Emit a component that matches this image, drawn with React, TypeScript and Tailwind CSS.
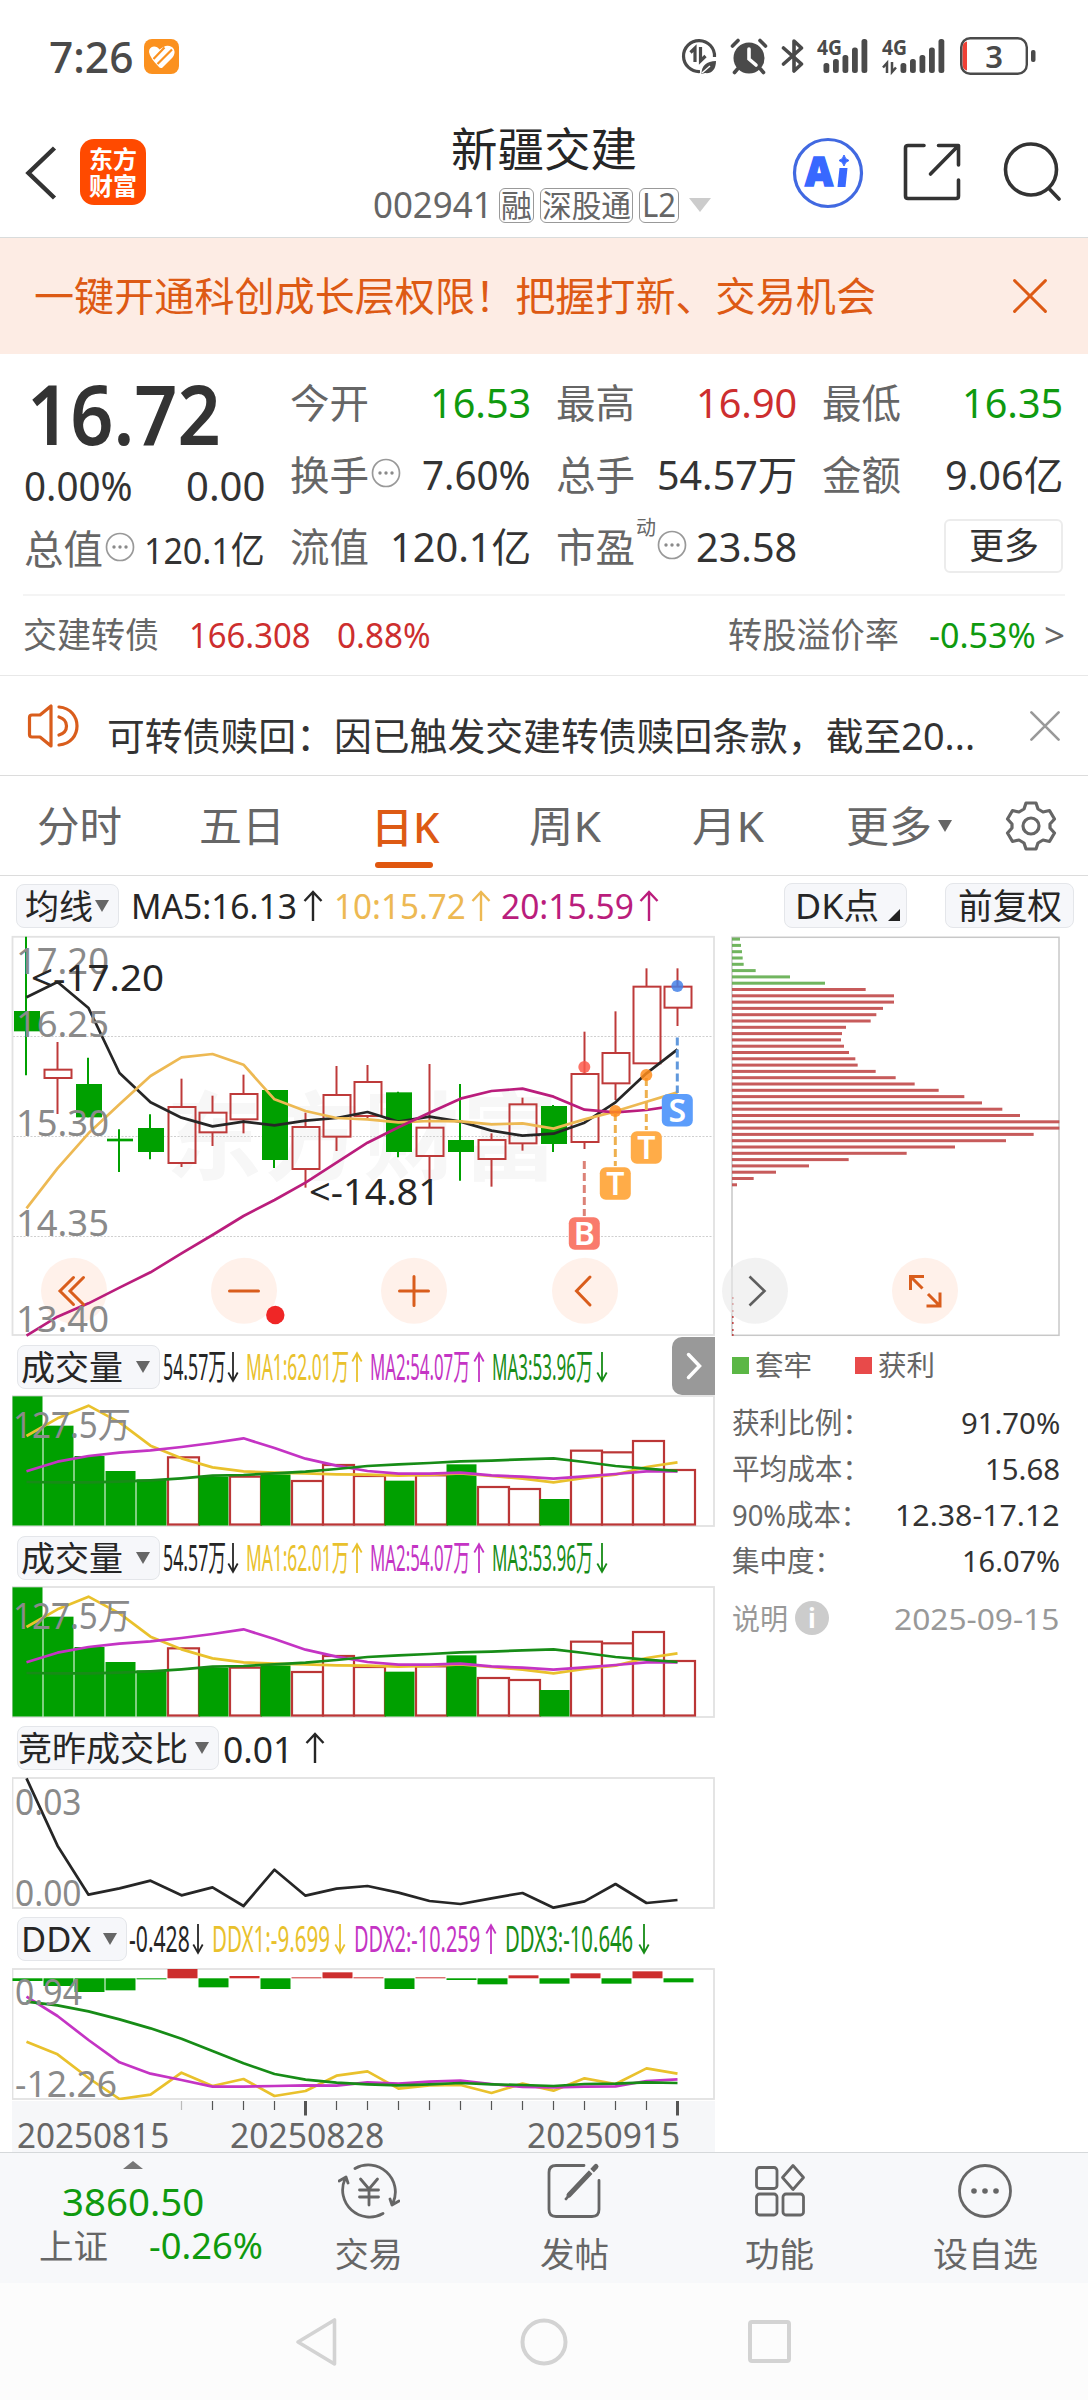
import React, { useLayoutEffect, useRef, type ReactNode } from "react";

/* Text that is condensed or widened horizontally to fill its box. */
function Fit({ className, children }: { className: string; children: ReactNode }) {
  const outer = useRef<HTMLSpanElement>(null);
  const inner = useRef<HTMLSpanElement>(null);
  useLayoutEffect(() => {
    const o = outer.current;
    const i = inner.current;
    if (o && i && i.offsetWidth > 0) {
      i.style.transform = `scaleX(${o.clientWidth / i.offsetWidth})`;
    }
  }, [children]);
  return (
    <span ref={outer} className={`flex shrink-0 whitespace-nowrap leading-none ${className}`}>
      <span ref={inner} className="inline-block shrink-0 origin-left whitespace-pre">
        {children}
      </span>
    </span>
  );
}

const X0 = 26;
const STEP = 31;
const cx = (i: number) => X0 + STEP * i;

function Series({ ys, base, color }: { ys: number[]; base: number; color: string }) {
  return (
    <polyline
      points={ys.map((v, i) => `${cx(i) + 0.5},${base + v / 3}`).join(" ")}
      fill="none"
      stroke={color}
      strokeWidth="2.7"
      strokeLinejoin="round"
    />
  );
}

function Frame({ y, h }: { y: number; h: number }) {
  return <rect x="12.5" y={y} width="701.5" height={h} fill="none" stroke="#e2e2e2" strokeWidth="1.8" />;
}

/* [kind, high, low, bodyTop, bodyBottom] */
const candles: [string, number, number, number, number][] = [
  ["g", 50, 466, 273, 334], ["r", 366, 582, 449, 474], ["g", 413, 592, 492, 592], ["g", 628, 756, 656, 664],
  ["g", 583, 718, 624, 696], ["r", 476, 741, 561, 729], ["r", 527, 678, 578, 637], ["r", 464, 640, 522, 598],
  ["g", 510, 744, 510, 720], ["r", 578, 803, 621, 747], ["r", 438, 693, 525, 650], ["r", 435, 594, 486, 588],
  ["g", 515, 712, 517, 696], ["r", 432, 780, 623, 708], ["g", 492, 782, 660, 696], ["r", 640, 800, 660, 717],
  ["r", 533, 692, 553, 670], ["g", 555, 696, 558, 672], ["r", 335, 687, 462, 666], ["r", 274, 540, 399, 490],
  ["r", 145, 430, 200, 430], ["r", 145, 318, 200, 263],
];
const ma5 = [232, 186, 264, 459, 547, 593, 619, 605, 616, 602, 594, 576, 605, 590, 605, 632, 647, 641, 608, 547, 460, 388];
const ma10 = [865, 745, 640, 553, 468, 412, 402, 434, 538, 573, 594, 598, 607, 603, 604, 613, 610, 626, 598, 574, 545, 517];
const ma20 = [1247, 1190, 1150, 1103, 1057, 1000, 945, 888, 840, 788, 728, 668, 622, 578, 536, 513, 506, 530, 569, 577, 570, 556];

function AxisText({ x, y, w, children, color = "#8a8a8a", size = 37 }: { x: number; y: number; w: number; children: string; color?: string; size?: number }) {
  return (
    <text x={x - 2} y={y} fontSize={size} fill={color} textLength={w + 4} lengthAdjust="spacingAndGlyphs">
      {children}
    </text>
  );
}

function Signal({ x, y, dotY, from, to, color, line, dot, label }: { x: number; y: number; dotY: number; from: number; to: number; color: string; line: string; dot: string; label: string }) {
  return (
    <g>
      <line x1={x} x2={x} y1={from} y2={to} stroke={line} strokeWidth="3" strokeDasharray="8 4" />
      <circle cx={x} cy={dotY} r="6" fill={dot} fillOpacity="0.85" />
      <rect x={x - 15.5} y={y} width="31" height="32.5" rx="6" fill={color} />
      <text x={x} y={y + 27.5} fontSize="32" fontWeight="600" fill="#fff" textAnchor="middle">
        {label}
      </text>
    </g>
  );
}

function KChart() {
  return (
    <svg className="block h-[402px] w-[704px] overflow-visible" viewBox="12 935 704 402">
      <text x="166" y="1172" fontSize="96" fontWeight="700" fill="#f7f7f7" textLength="392">东方财富</text>
      {[1036.5, 1136.5, 1236.5].map((y) => (
        <line key={y} x1="13" x2="714" y1={y} y2={y} stroke="#cfcfcf" strokeWidth="1" strokeDasharray="2 1.5" />
      ))}
      <Frame y={936.8} h={398.2} />
      {[74, 244, 414, 585].map((x) => (
        <circle key={x} cx={x} cy="1290.7" r="33" fill="#fff1ea" />
      ))}
      {candles.map(([k, hi, lo, t, b], i) => {
        const y = (v: number) => 920 + v / 3;
        const c = k === "g" ? "#00a000" : "#be3a3a";
        return k === "g" ? (
          <g key={i}>
            <line x1={cx(i)} x2={cx(i)} y1={y(hi)} y2={y(lo)} stroke={c} strokeWidth="2" />
            <rect x={cx(i) - 12} y={y(t)} width="26" height={y(b) - y(t)} fill={c} />
          </g>
        ) : (
          <g key={i} stroke={c} strokeWidth="2" fill="none">
            <line x1={cx(i) + 0.5} x2={cx(i) + 0.5} y1={y(hi)} y2={y(t)} />
            <line x1={cx(i) + 0.5} x2={cx(i) + 0.5} y1={y(b)} y2={y(lo)} />
            <rect x={cx(i) - 12.5} y={y(t)} width="27" height={y(b) - y(t)} />
          </g>
        );
      })}
      <Series ys={ma5} base={920} color="#262626" />
      <Series ys={ma10} base={920} color="#edb953" />
      <Series ys={ma20} base={920} color="#ba1d7c" />
      <AxisText x={18} y={974} w={89}>17.20</AxisText>
      <AxisText x={18} y={1037} w={89}>16.25</AxisText>
      <AxisText x={18} y={1136} w={89}>15.30</AxisText>
      <AxisText x={18} y={1236} w={89}>14.35</AxisText>
      <AxisText x={18} y={1332} w={89}>13.40</AxisText>
      <AxisText x={33} y={991} w={129} color="#262626">{"<-17.20"}</AxisText>
      <AxisText x={311} y={1205} w={127} color="#262626">{"<-14.81"}</AxisText>
      <g fill="none" stroke="#d95d1c" strokeWidth="3" strokeLinecap="round">
        <path d="M73.5 1277.5 60 1291l13.500 13.500M83.500 1277.500 70 1291l13.500 13.500" />
        <path d="M229.500 1291h29" />
        <path d="M399.500 1291h29M414 1276.500v29" />
        <path d="M590 1277 576.500 1291l13.500 14" />
      </g>
      <circle cx="275.3" cy="1315" r="9.200" fill="#ef2626" />
      <Signal x={584.3} y={1217.3} dotY={1067} from={1161} to={1216} color="#f97b6c" line="#dc8277" dot="#fb5a4c" label="B" />
      <Signal x={615.3} y={1167.3} dotY={1111} from={1113} to={1166} color="#ffac48" line="#eeb04e" dot="#ff8d1c" label="T" />
      <Signal x={646.3} y={1131.3} dotY={1075} from={1078} to={1130} color="#ffac48" line="#eeb04e" dot="#ff8d1c" label="T" />
      <Signal x={677.3} y={1094} dotY={986} from={1037.500} to={1093} color="#5c9dfb" line="#6098dc" dot="#4481e8" label="S" />
    </svg>
  );
}

const volumes: [string, number][] = [
  ["g", 199], ["g", 287], ["g", 378], ["g", 423], ["g", 448], ["r", 382], ["g", 440], ["r", 440], ["g", 433], ["r", 453], ["r", 405],
  ["r", 438], ["g", 452], ["r", 436], ["g", 403], ["r", 471], ["r", 477], ["g", 507], ["r", 362], ["r", 367], ["r", 333], ["r", 420],
];
const vol1 = [318, 265, 227, 277, 347, 385, 412, 424, 428, 430, 433, 434, 437, 435, 430, 438, 446, 457, 444, 434, 411, 397];
const vol2 = [424, 395, 378, 368, 361, 351, 339, 325, 354, 386, 407, 423, 431, 431, 428, 436, 440, 446, 439, 432, 424, 424];
const vol3 = [456, 457, 457, 455, 451, 445, 437, 435, 430, 425, 417, 408, 403, 399, 394, 392, 388, 385, 396, 408, 416, 423];

function VolumeChart() {
  return (
    <svg className="block h-[132px] w-[704px]" viewBox="12 1395 704 132">
      <Frame y={1396} h={130} />
      {volumes.map(([k, t], i) => {
        const y = 1330 + t / 3;
        return k === "g" ? (
          <rect key={i} x={12.500 + STEP * i} y={y} width="30" height={1525.500 - y} fill="#00a000" />
        ) : (
          <rect key={i} x={12.500 + STEP * i + 0.500} y={y} width="31" height={1524.500 - y} fill="#fff" stroke="#bb3636" strokeWidth="2.200" />
        );
      })}
      <Series ys={vol1} base={1330} color="#e9c12c" />
      <Series ys={vol2} base={1330} color="#c434c4" />
      <Series ys={vol3} base={1330} color="#178c17" />
      <AxisText x={15} y={1438} w={114} size={36}>127.5万</AxisText>
    </svg>
  );
}

const ratio = [715, 917, 1064, 1045, 1022, 1066, 1042, 1098, 989, 1067, 1046, 1038, 1058, 1083, 1092, 1075, 1059, 1103, 1084, 1032, 1089, 1080];

function RatioChart() {
  return (
    <svg className="block h-[132px] w-[704px]" viewBox="12 1777 704 132">
      <Frame y={1778} h={130} />
      <Series ys={ratio} base={1540} color="#262626" />
      <AxisText x={17} y={1815} w={62.500} size={36}>0.03</AxisText>
      <AxisText x={17} y={1906} w={62.500} size={36}>0.00</AxisText>
    </svg>
  );
}

const ddxBars: [string, number][] = [
  ["g", 243], ["g", 258], ["g", 276], ["g", 271], ["g", 238], ["r", 207], ["g", 262], ["r", 228], ["g", 267], ["r", 232], ["r", 217],
  ["r", 232], ["g", 267], ["r", 232], ["g", 240], ["g", 253], ["r", 226], ["g", 251], ["r", 220], ["g", 251], ["r", 214], ["g", 247],
];
const ddx1 = [425, 463, 534, 597, 584, 518, 558, 537, 588, 573, 527, 514, 566, 556, 555, 579, 551, 572, 535, 552, 505, 521];
const ddx2 = [290, 348, 420, 487, 521, 540, 560, 560, 558, 556, 557, 547, 551, 545, 542, 552, 561, 562, 560, 559, 543, 538];
const ddx3 = [305, 316, 334, 358, 385, 416, 453, 490, 522, 539, 548, 553, 556, 553, 549, 553, 555, 558, 552, 551, 547, 549];

function DdxChart() {
  return (
    <svg className="block h-[132px] w-[704px]" viewBox="12 1968 704 132">
      <Frame y={1969} h={130} />
      {ddxBars.map(([k, v], i) => {
        const y = 1900 + v / 3;
        return k === "g" ? (
          <rect key={i} x={12.500 + STEP * i} y={1978.300} width="30" height={y - 1978.300} fill="#00a000" />
        ) : (
          <rect key={i} x={12.500 + STEP * i} y={y} width="30" height={1978.300 - y} fill="#cd2e2e" />
        );
      })}
      <Series ys={ddx1} base={1900} color="#e9c12c" />
      <Series ys={ddx2} base={1900} color="#c434c4" />
      <Series ys={ddx3} base={1900} color="#178c17" />
      <AxisText x={17} y={2005} w={63} size={36}>0.94</AxisText>
      <AxisText x={17} y={2097} w={98} size={36}>-12.26</AxisText>
    </svg>
  );
}

const chips = [
  120, 123, 126, 128, 131, 167, 270, 375, 497, 582, 582, 549, 529, 512, 438, 426, 423, 432, 447, 466, 473, 527, 587, 644, 716, 793, 846,
  907, 960, 1078, 1078, 1001, 918, 765, 620, 446, 327, 228, 161, 111,
];

function ChipChart() {
  return (
    <svg className="block h-[402px] w-[340px] overflow-visible" viewBox="731 935 340 402">
      <rect x="732" y="937.300" width="327" height="398" fill="none" stroke="#c8c8c8" strokeWidth="1.500" />
      <g className="opacity-90">
        {chips.map((v, i) => (
          <rect key={i} x="732" y={937.600 + i * 6.300} width={(v - 96) / 3} height="3" fill={i < 8 ? "#62ad4e" : "#c14a4a"} />
        ))}
      </g>
      {[1297, 1303, 1310, 1316, 1322, 1329, 1334].map((y) => (
        <rect key={y} x="732" y={y} width="1.600" height="2" fill="#c14a4a" />
      ))}
      <circle cx="755" cy="1290.700" r="33" fill="#e9e9e9" fillOpacity="0.6" />
      <path d="m749.500 1276.500 15 14.500-15 14.500" fill="none" stroke="#5f5f5f" strokeWidth="2.600" />
      <circle cx="925" cy="1290.700" r="33" fill="#fff1ea" />
      <g fill="none" stroke="#d95d1c" strokeWidth="3">
        <path d="M924 1276.500h-13.500V1290M911 1277l11.500 11.500M926.500 1306H940v-13.500M939.500 1305.500 928 1294" />
      </g>
    </svg>
  );
}

function MoreDots({ className = "" }: { className?: string }) {
  return (
    <svg className={`h-[30px] w-[30px] shrink-0 ${className}`} viewBox="0 0 30 30">
      <circle cx="15" cy="15" r="13.500" fill="none" stroke="#999" strokeWidth="1.700" />
      {[9, 15, 21].map((x) => (
        <circle key={x} cx={x} cy="15" r="1.700" fill="#8a8a8a" />
      ))}
    </svg>
  );
}

function Cross({ className }: { className: string }) {
  return (
    <svg className={className} viewBox="0 0 32 32" fill="none" stroke="currentColor" strokeWidth="2.800" strokeLinecap="round">
      <path d="m1.500 1.500 29 29m0-29-29 29" />
    </svg>
  );
}

function Down({ className }: { className: string }) {
  return (
    <svg className={`h-[12px] w-[14px] shrink-0 ${className}`} viewBox="0 0 14 12">
      <path d="M0 0h14L7 12z" fill="#666" />
    </svg>
  );
}

function Selector({ className, textClass, children }: { className: string; textClass: string; children: string }) {
  return (
    <div className={`flex h-[44px] shrink-0 items-center justify-between rounded-[8px] border-[1.5px] border-[#e4e6ea] bg-[#f6f7fa] pr-[9px] text-[34px] text-[#262626] ${className}`}>
      <Fit className={textClass}>{children}</Fit>
      <Down className="" />
    </div>
  );
}

function Reading({ className, value, arrow, widthClass }: { className: string; value: string; arrow: string; widthClass: string }) {
  return (
    <div className={`flex shrink-0 items-center ${className}`}>
      <Fit className={widthClass}>{value}</Fit>
      <Arrow up={arrow === "↑"} />
    </div>
  );
}

function Arrow({ up, wide = false }: { up: boolean; wide?: boolean }) {
  return wide ? (
    <svg className="h-[32px] w-[20px] shrink-0" viewBox="0 0 20 32" fill="none" stroke="currentColor" strokeWidth="2.400">
      <path d="M10 31V2M1.500 11 10 2l8.500 9" />
    </svg>
  ) : (
    <svg className={`h-[32px] w-[12px] shrink-0 ${up ? "" : "rotate-180"}`} viewBox="0 0 12 32" fill="none" stroke="currentColor" strokeWidth="1.800">
      <path d="M6 31V2M1.300 10.500 6 2l4.700 8.500" />
    </svg>
  );
}

function VolumeHead({ expandable }: { expandable: boolean }) {
  return (
    <div className="flex h-[58px] items-center pt-[2px] text-[36px]">
      <Selector className="ml-[5px] w-[143px] pl-[3px]" textClass="w-[102px]">成交量</Selector>
      <Reading className="ml-[3px] gap-px text-[#262626]" widthClass="w-[63px]" value="54.57万" arrow="↓" />
      <Reading className="ml-[7px] gap-[2px] text-[#e9c12c]" widthClass="w-[103px]" value="MA1:62.01万" arrow="↑" />
      <Reading className="ml-[7px] gap-[3px] text-[#c434c4]" widthClass="w-[100px]" value="MA2:54.07万" arrow="↑" />
      <Reading className="ml-[7px] gap-[3px] text-[#178c17]" widthClass="w-[101px]" value="MA3:53.96万" arrow="↓" />
      {expandable && (
        <div className="-mt-[2px] ml-auto mr-px flex h-[58px] w-[43px] items-center justify-center rounded-l-[10px] bg-[#999]">
          <svg className="h-[28px] w-[16px]" viewBox="0 0 16 28" fill="none" stroke="#fff" strokeWidth="3.500" strokeLinecap="round">
            <path d="m2.500 2.500 11 11.500-11 11.500" />
          </svg>
        </div>
      )}
    </div>
  );
}

function Stat({ label, dots, sup, value, widthClass, color = "text-[#333]", small }: { label: string; dots?: boolean; sup?: string; value: string; widthClass: string; color?: string; small?: boolean }) {
  return (
    <div className="flex h-[72px] items-center">
      <Fit className="w-[79px] text-[40px] text-[#666]">{label}</Fit>
      {sup && <span className="-mr-[2px] -mt-[38px] w-[22px] pl-px text-[20px] leading-none text-[#666]">{sup}</span>}
      {dots && <MoreDots className="-mt-[5px] ml-[2px]" />}
      <Fit className={`ml-auto ${small ? "text-[37px]" : "text-[40px]"} ${color} ${widthClass}`}>{value}</Fit>
    </div>
  );
}

function StatusBar() {
  const g = "#4a4a4a";
  return (
    <div className="flex h-[112px] items-center pl-[49px] text-[#4a4a4a]">
      <Fit className="-mt-px w-[84px] text-[44px] font-medium">7:26</Fit>
      <svg className="ml-[11px] h-[35px] w-[35px]" viewBox="0 0 35 35">
        <rect width="35" height="35" rx="8" fill="#fb911f" />
        <path d="M5 13q0-5 5-5.500 3.500 0 5.500 3 3-2.500 6-3.500 6-1 8.500 3.500 1.500 4-1.500 8L18 29q-2 .5-3.500-1.500Q6 19 5 13z" fill="#fff" />
        <path d="M9.500 20 20.500 8.500M13.500 25 28 10.500" fill="none" stroke="#fb911f" strokeWidth="2.200" />
      </svg>
      <svg className="ml-[502px] h-[36px] w-[36px]" viewBox="0 0 36 36" fill="none" stroke={g} strokeWidth="3.200">
        <path d="M19 33.500A15.500 15.500 0 1 1 33.500 19" />
        <path d="M9.500 14.500 14 10v14M19.500 9v14l5-5" />
        <path d="M20.500 36c0-8 5-13 14.500-13 0 9-5 13-11 12z" fill={g} stroke="none" />
        <path d="m21 35 8-7" stroke="#fff" strokeWidth="1.500" />
      </svg>
      <svg className="ml-[13px] h-[37px] w-[38px]" viewBox="0 0 38 37" fill="none" stroke={g} strokeLinecap="round">
        <circle cx="19" cy="20" r="15.500" fill={g} stroke="none" />
        <path d="M2.500 8 8 2.500M35.500 8 30 2.500M7.500 31 4.500 34.500M30.500 31l3 3.500" strokeWidth="3.600" />
        <path d="M19 11v10l7 6" stroke="#fff" strokeWidth="3.600" />
      </svg>
      <svg className="ml-[13px] h-[36px] w-[24px]" viewBox="0 0 24 36" fill="none" stroke={g} strokeWidth="3.600" strokeLinecap="round" strokeLinejoin="round">
        <path d="m2.500 10 18 16-7.500 7V3l7.500 7-18 16" />
      </svg>
      <svg className="ml-[12px] h-[36px] w-[52px] overflow-visible" viewBox="0 0 52 36">
        <text x="0" y="17" fontSize="22" fontWeight="700" fill={g} textLength="25" lengthAdjust="spacingAndGlyphs">4G</text>
        {[[6.5, 25], [16, 21], [25.5, 17], [35, 9.500], [44.500, 1]].map(([x, y]) => (
          <rect key={x} x={x} y={y} width="5.800" height={35 - y} rx="2.500" fill={g} />
        ))}
      </svg>
      <svg className="ml-[13px] h-[36px] w-[64px] overflow-visible" viewBox="0 0 64 36">
        <text x="0" y="17" fontSize="22" fontWeight="700" fill={g} textLength="25" lengthAdjust="spacingAndGlyphs">4G</text>
        <path d="M1 29.500 5 25v10M10 24v10l4-4.500" fill="none" stroke={g} strokeWidth="2.500" />
        {[[18.500, 25], [28, 21], [37.500, 17], [47, 9.500], [56.500, 1]].map(([x, y]) => (
          <rect key={x} x={x} y={y} width="5.800" height={35 - y} rx="2.500" fill={g} />
        ))}
      </svg>
      <svg className="ml-[14px] h-[38px] w-[78px] overflow-visible" viewBox="0 0 78 38">
        <path d="M7 4.500v29q-4.500-1-4.500-6v-17q0-5 4.500-6z" fill="#ef4136" />
        <rect x="1.200" y="1.200" width="65.600" height="35.600" rx="9" fill="none" stroke={g} strokeWidth="2.400" />
        <rect x="71" y="13" width="4.500" height="12" rx="2" fill={g} />
        <text x="34" y="30.500" fontSize="31" fontWeight="600" fill={g} textAnchor="middle">3</text>
      </svg>
    </div>
  );
}

function Header() {
  return (
    <header className="flex h-[126px] items-center border-b border-[#d9dcdc] text-[#333]">
      <svg className="-mt-[4px] ml-[25px] h-[54px] w-[32px] shrink-0" viewBox="0 0 32 54" fill="none" stroke="#333" strokeWidth="4.500">
        <path d="M29.500 2 3.500 27l26 25" />
      </svg>
      <div className="-mt-[5px] ml-[23px] flex h-[66px] w-[66px] shrink-0 flex-col items-center justify-center rounded-[14px] bg-[#ff4a00] text-[24px] font-bold text-white">
        <span className="leading-[27px]">东方</span>
        <span className="leading-[27px]">财富</span>
      </div>
      <div className="ml-[227px] flex w-[342px] shrink-0 flex-col">
        <h1 className="ml-[78px] mt-[2px] flex h-[54px] items-center text-[46px] font-normal text-[#262626]">
          <Fit className="w-[186px]">新疆交建</Fit>
        </h1>
        <div className="mt-[5px] flex h-[50px] items-center text-[#666]">
          <Fit className="w-[120px] text-[36px]">002941</Fit>
          <div className="ml-[6px] flex h-[35px] w-[35px] items-center justify-center rounded-[6px] border-[1.5px] border-[#999] text-[31px]">
            <Fit className="w-[31px]">融</Fit>
          </div>
          <div className="ml-[6px] flex h-[35px] w-[93px] items-center justify-center rounded-[6px] border-[1.5px] border-[#999] text-[31px]">
            <Fit className="w-[89px]">深股通</Fit>
          </div>
          <div className="ml-[6px] flex h-[35px] w-[40px] items-center justify-center rounded-[6px] border-[1.5px] border-[#999] text-[32px]">
            <Fit className="w-[34px]">L2</Fit>
          </div>
          <svg className="ml-[10px] h-[14px] w-[22px]" viewBox="0 0 22 14"><path d="M0 0h22L11 14z" fill="#ccc" /></svg>
        </div>
      </div>
      <svg className="-mt-[4px] ml-[77px] h-[72px] w-[72px] shrink-0" viewBox="0 0 72 72">
        <circle cx="36" cy="36" r="33.500" fill="none" stroke="#4169e1" strokeWidth="3.200" />
        <path d="M52 18q1 4.500 5 5.500-4 1-5 5.500-1-4.500-5-5.500 4-1 5-5.500z" fill="#3868ff" stroke="#3868ff" strokeWidth="1" />
        <text x="13" y="49" fontSize="40" fontWeight="900" fill="#3868ff" stroke="#3868ff" strokeWidth="1.500" textLength="28" lengthAdjust="spacingAndGlyphs">A</text>
        <path d="M47.500 31h8l-2 19h-8z" fill="#3868ff" />
      </svg>
      <svg className="-mt-[6px] ml-[39px] h-[58px] w-[58px] shrink-0" viewBox="0 0 58 58" fill="none" stroke="#333" strokeWidth="3.600" strokeLinecap="round" strokeLinejoin="round">
        <path d="M21 2.500H5Q2.500 2.500 2.500 5v48q0 2.500 2.500 2.500h48q2.500 0 2.500-2.500V37M35.500 2.500h20v19.500M55 3 27.500 31" />
      </svg>
      <svg className="-mt-[6px] ml-[42px] h-[59px] w-[59px] shrink-0" viewBox="0 0 59 59" fill="none" stroke="#333" strokeWidth="3.600" strokeLinecap="round">
        <circle cx="28" cy="27.500" r="25.500" />
        <path d="m46 46.500 10 10.500" />
      </svg>
    </header>
  );
}

function Quote() {
  return (
    <section className="grid h-[240px] grid-cols-[241px_241px_241px_241px] gap-x-[25px] pl-[24px] pt-[13px]">
      <div className="flex flex-col">
        <div className="flex h-[90px] items-center pl-[3px]">
          <Fit className="w-[194px] text-[83px] font-semibold text-[#333]">16.72</Fit>
        </div>
        <div className="flex h-[56px] items-center justify-between pt-[2px] text-[40px] text-[#333]">
          <Fit className="w-[109px]">0.00%</Fit>
          <Fit className="w-[79px]">0.00</Fit>
        </div>
        <Stat label="总值" dots value="120.1亿" widthClass="w-[121px]" small />
      </div>
      <div>
        <Stat label="今开" value="16.53" widthClass="w-[101px]" color="text-[#0f9a0f]" />
        <Stat label="换手" dots value="7.60%" widthClass="w-[109px]" />
        <Stat label="流值" value="120.1亿" widthClass="w-[141px]" />
      </div>
      <div>
        <Stat label="最高" value="16.90" widthClass="w-[101px]" color="text-[#cd2e2e]" />
        <Stat label="总手" value="54.57万" widthClass="w-[140px]" />
        <Stat label="市盈" sup="动" dots value="23.58" widthClass="w-[101px]" />
      </div>
      <div>
        <Stat label="最低" value="16.35" widthClass="w-[101px]" color="text-[#0f9a0f]" />
        <Stat label="金额" value="9.06亿" widthClass="w-[118px]" />
        <div className="ml-auto mt-[8px] flex h-[54px] w-[119px] items-center justify-center rounded-[6px] border-2 border-[#ececec] text-[36px] text-[#333]">
          <Fit className="w-[70px]">更多</Fit>
        </div>
      </div>
    </section>
  );
}

function Tabs() {
  return (
    <nav className="flex h-[100px] items-center border-b border-[#dcdcdc] text-[42px] text-[#666]">
      <Fit className="ml-[37px] w-[85px]">分时</Fit>
      <Fit className="ml-[77px] w-[86px]">五日</Fit>
      <div className="ml-[86px] flex h-full w-[69px] flex-col justify-end text-[#dd5a14]">
        <Fit className="w-[69px] font-medium">日K</Fit>
        <div className="mb-[7px] ml-[4px] mt-[14px] h-[6px] w-[58px] rounded-full bg-[#e0570f]" />
      </div>
      <Fit className="ml-[89px] w-[72px]">周K</Fit>
      <Fit className="ml-[91px] w-[72px]">月K</Fit>
      <Fit className="ml-[82px] w-[86px]">更多</Fit>
      <Down className="ml-[6px]" />
      <svg className="ml-[53px] h-[52px] w-[52px]" viewBox="0 0 52 52" fill="none" stroke="#666" strokeWidth="3.200" strokeLinejoin="round">
        <path d="M21 3h10l2 6 5 3 6.500-1.500 5 8.500-4.500 5v4l4.500 5-5 8.500L38 40l-5 3-2 6H21l-2-6-5-3-6.500 1.500-5-8.500L7 28v-4l-4.500-5 5-8.500L14 12l5-3z" />
        <circle cx="26" cy="26" r="8" />
      </svg>
    </nav>
  );
}

function ChipRow({ label, labelW, value, valueW }: { label: string; labelW: string; value: string; valueW: string }) {
  return (
    <div className="flex h-[46px] w-[328px] items-center justify-between text-[29px]">
      <Fit className={`text-[#666] ${labelW}`}>{label}</Fit>
      <Fit className={`text-[#333] ${valueW}`}>{value}</Fit>
    </div>
  );
}

function DateAxis() {
  return (
    <div className="mt-px flex h-[51px] w-[703px] flex-col bg-[#f6f7f9]">
      <svg className="block h-[15px] w-[703px] shrink-0" viewBox="12 2101 703 15">
        {Array.from({ length: 17 }, (_, k) => k + 5).map((i) => {
          const major = i === 9 || i === 21;
          return <line key={i} x1={cx(i) + 0.500} x2={cx(i) + 0.500} y1="2101" y2={major ? 2115.500 : 2110} stroke={i === 5 ? "#bbb" : "#555"} strokeWidth={major ? 3 : 1.200} />;
        })}
      </svg>
      <div className="flex h-[36px] items-center text-[35px] text-[#666]">
        <Fit className="ml-[5px] w-[152px]">20250815</Fit>
        <Fit className="ml-[61px] w-[154px]">20250828</Fit>
        <Fit className="ml-[143px] w-[153px]">20250915</Fit>
      </div>
    </div>
  );
}

function BottomItem({ icon, label, widthClass }: { icon: ReactNode; label: string; widthClass: string }) {
  return (
    <div className="flex w-[205.500px] shrink-0 flex-col items-center">
      <svg className="mt-[9px] h-[58px] w-[62px]" viewBox="-31 -29 62 58" fill="none" stroke="#666" strokeWidth="2.800" strokeLinecap="round" strokeLinejoin="round">
        {icon}
      </svg>
      <Fit className={`mt-[17px] text-[34px] text-[#666] ${widthClass}`}>{label}</Fit>
    </div>
  );
}

function BottomBar() {
  return (
    <footer className="flex h-[131px] border-t border-[#d5d8da] bg-[#f7f8fa]">
      <div className="flex w-[266px] shrink-0 flex-col items-start">
        <svg className="ml-[123px] mt-[8px] h-[8px] w-[20px]" viewBox="0 0 20 8"><path d="M10 0 20 8H0z" fill="#777" /></svg>
        <Fit className="ml-[62px] mt-[12px] w-[142px] text-[39px] text-[#0f9a0f]">3860.50</Fit>
        <div className="ml-[39px] mt-[8px] flex items-center text-[#666]">
          <Fit className="w-[69px] text-[34px]">上证</Fit>
          <Fit className="ml-[41px] w-[114px] text-[36px] text-[#0f9a0f]">-0.26%</Fit>
        </div>
      </div>
      <BottomItem
        label="交易"
        widthClass="w-[68px]"
        icon={
          <g>
            <path d="M-14-22.500A27 27 0 0 1 24 12M14 22.500A27 27 0 0 1-24-12M-30-10l7-4 2 6M30 10l-7 4-2-6" />
            <path d="M-8.500-12 0-2l8.500-10M-9.500-1h19M-9.500 6h19M0-2v16" />
          </g>
        }
      />
      <BottomItem
        label="发帖"
        widthClass="w-[69px]"
        icon={
          <g>
            <path d="M10-25.500h-28q-7 0-7 7v37q0 7 7 7h36q7 0 7-7v-29" />
            <path d="M22-24.500-5 4" strokeWidth="5" />
            <path d="m-4 3-4 5" />
            <path d="m15-22 6 6" stroke="#f7f8fa" strokeWidth="2" />
          </g>
        }
      />
      <BottomItem
        label="功能"
        widthClass="w-[69px]"
        icon={
          <g>
            <rect x="-23.500" y="-23.500" width="20.500" height="21" rx="3" />
            <rect x="-23.500" y="3" width="20.500" height="21" rx="3" />
            <rect x="3" y="3" width="20.500" height="21" rx="3" />
            <path d="m13-25.500 10.500 12L13-1.500 2.500-13.500z" />
          </g>
        }
      />
      <BottomItem
        label="设自选"
        widthClass="w-[105px]"
        icon={
          <g>
            <circle cx="0" cy="0" r="25.500" />
            <g fill="#666" stroke="none">
              <circle cx="-11" cy="0" r="2.800" />
              <circle cx="0" cy="0" r="2.800" />
              <circle cx="11" cy="0" r="2.800" />
            </g>
          </g>
        }
      />
    </footer>
  );
}

function SystemNav() {
  return (
    <div className="flex h-[117px] items-center bg-[#fcfcfc]">
      <svg className="ml-[294px] h-[50px] w-[44px]" viewBox="0 0 44 50" fill="none" stroke="#d3d3d3" strokeWidth="3.600" strokeLinejoin="round">
        <path d="M40.500 3v44L4 25z" />
      </svg>
      <svg className="ml-[181px] h-[50px] w-[50px]" viewBox="0 0 50 50" fill="none" stroke="#d3d3d3" strokeWidth="4">
        <circle cx="25" cy="25" r="21.500" />
      </svg>
      <div className="ml-[179px] h-[43px] w-[43px] rounded-[4px] border-4 border-[#d3d3d3]" />
    </div>
  );
}

export default function App() {
  return (
    <div className="flex h-[2400px] w-[1088px] flex-col overflow-hidden bg-white font-['Noto_Sans','Noto_Sans_CJK_SC',sans-serif]">
      <StatusBar />
      <Header />
      <div className="flex h-[116px] items-center bg-[#fdece4] text-[#dd5a14]">
        <Fit className="ml-[34px] w-[842px] text-[40px]">一键开通科创成长层权限！把握打新、交易机会</Fit>
        <Cross className="ml-[137px] h-[34px] w-[34px]" />
      </div>
      <Quote />
      <div className="mx-[23px] h-[2px] bg-[#f4f4f4]" />
      <div className="flex h-[80px] items-center border-b border-[#e8e8e8] pb-[2px] text-[35px] text-[#666]">
        <Fit className="ml-[23px] w-[136px]">交建转债</Fit>
        <Fit className="ml-[30px] w-[122px] text-[#cd2e2e]">166.308</Fit>
        <Fit className="ml-[26px] w-[94px] text-[#cd2e2e]">0.88%</Fit>
        <Fit className="ml-[297px] w-[171px]">转股溢价率</Fit>
        <Fit className="ml-[30px] w-[107px] text-[#0f9a0f]">-0.53%</Fit>
        <Fit className="ml-[8px] w-[21px]">&gt;</Fit>
      </div>
      <div className="flex h-[100px] items-center border-b border-[#dcdcdc] text-[38px] text-[#333]">
        <svg className="ml-[27px] h-[44px] w-[52px]" viewBox="0 0 52 44" fill="none" stroke="#d95d1c" strokeWidth="3.200" strokeLinejoin="round" strokeLinecap="round">
          <path d="M24 2v40L13 33H5q-2.500 0-2.500-2.500v-17Q2.500 11 5 11h8zM32 3c24 2 24 36 0 38M32 13c10 3 10 15 0 18" />
        </svg>
        <Fit className="ml-[28px] mt-[18px] w-[868px]">可转债赎回：因已触发交建转债赎回条款，截至20...</Fit>
        <Cross className="ml-[55px] h-[30px] w-[30px] text-[#999]" />
      </div>
      <Tabs />
      <div className="flex h-[59px] items-center text-[35px]">
        <Selector className="ml-[16px] w-[103px] pl-[8px]" textClass="w-[68px]">均线</Selector>
        <div className="ml-[12px] flex items-center text-[#262626]">
          <Fit className="w-[166px]">MA5:16.13</Fit>
          <span className="w-[6px]" />
          <Arrow up wide />
        </div>
        <div className="ml-[11px] flex items-center text-[#edb953]">
          <Fit className="w-[132px]">10:15.72</Fit>
          <span className="w-[5px]" />
          <Arrow up wide />
        </div>
        <div className="ml-[10px] flex items-center text-[#ba1d7c]">
          <Fit className="w-[133px]">20:15.59</Fit>
          <span className="w-[5px]" />
          <Arrow up wide />
        </div>
        <div className="ml-[125px] flex h-[45px] w-[123px] items-center rounded-[8px] border-[1.5px] border-[#e4e6ea] bg-[#f6f7fa] pl-[10px] text-[#262626]">
          <Fit className="w-[84px]">DK点</Fit>
          <svg className="ml-[9px] mt-[18px] h-[12px] w-[12px]" viewBox="0 0 12 12"><path d="M12 0v12H0z" fill="#222" /></svg>
        </div>
        <div className="ml-[38px] flex h-[45px] w-[129px] items-center justify-center rounded-[8px] border-[1.5px] border-[#e4e6ea] bg-[#f6f7fa] text-[#262626]">
          <Fit className="w-[104px]">前复权</Fit>
        </div>
      </div>
      <main className="flex h-[1217px] pl-[12px]">
        <div className="flex w-[704px] shrink-0 flex-col">
          <KChart />
          <VolumeHead expandable />
          <VolumeChart />
          <div className="h-px" />
          <VolumeHead expandable={false} />
          <VolumeChart />
          <div className="flex h-[59px] items-center pt-px text-[37px] text-[#262626]">
            <Selector className="ml-[5px] w-[202px]" textClass="w-[170px]">竞昨成交比</Selector>
            <Fit className="ml-[4px] w-[70px]">0.01</Fit>
            <span className="w-[12px]" />
            <Arrow up wide />
          </div>
          <RatioChart />
          <div className="flex h-[59px] items-center text-[36px]">
            <Selector className="ml-[5px] w-[110px] pl-[3px]" textClass="w-[70px]">DDX</Selector>
            <Reading className="ml-[2px] gap-[2px] text-[#262626]" widthClass="w-[61px]" value="-0.428" arrow="↓" />
            <Reading className="ml-[8px] gap-[4px] text-[#e9c12c]" widthClass="w-[118px]" value="DDX1:-9.699" arrow="↓" />
            <Reading className="ml-[8px] gap-[5px] text-[#c434c4]" widthClass="w-[126px]" value="DDX2:-10.259" arrow="↑" />
            <Reading className="ml-[8px] gap-[5px] text-[#178c17]" widthClass="w-[128px]" value="DDX3:-10.646" arrow="↓" />
          </div>
          <DdxChart />
          <DateAxis />
        </div>
        <div className="ml-[15px] flex w-[340px] flex-col">
          <ChipChart />
          <div className="flex h-[56px] items-center text-[28px] text-[#666]">
            <div className="ml-px h-[17px] w-[17px] bg-[#5bb745]" />
            <Fit className="ml-[6px] w-[57px]">套牢</Fit>
            <div className="ml-[43px] h-[17px] w-[17px] bg-[#e84a4a]" />
            <Fit className="ml-[6px] w-[57px]">获利</Fit>
          </div>
          <div className="mt-[6px] pl-px">
            <ChipRow label="获利比例：" labelW="w-[138px]" value="91.70%" valueW="w-[99px]" />
            <ChipRow label="平均成本：" labelW="w-[138px]" value="15.68" valueW="w-[75px]" />
            <ChipRow label="90%成本：" labelW="w-[136px]" value="12.38-17.12" valueW="w-[165px]" />
            <ChipRow label="集中度：" labelW="w-[110px]" value="16.07%" valueW="w-[98px]" />
          </div>
          <div className="mt-[12px] flex h-[46px] w-[328px] items-center pl-px text-[29px] text-[#999]">
            <Fit className="w-[56px]">说明</Fit>
            <div className="ml-[7px] flex h-[34px] w-[34px] items-center justify-center rounded-full bg-[#ccc] text-[26px] font-bold leading-none text-white">i</div>
            <Fit className="ml-auto w-[165px]">2025-09-15</Fit>
          </div>
        </div>
      </main>
      <BottomBar />
      <SystemNav />
    </div>
  );
}
